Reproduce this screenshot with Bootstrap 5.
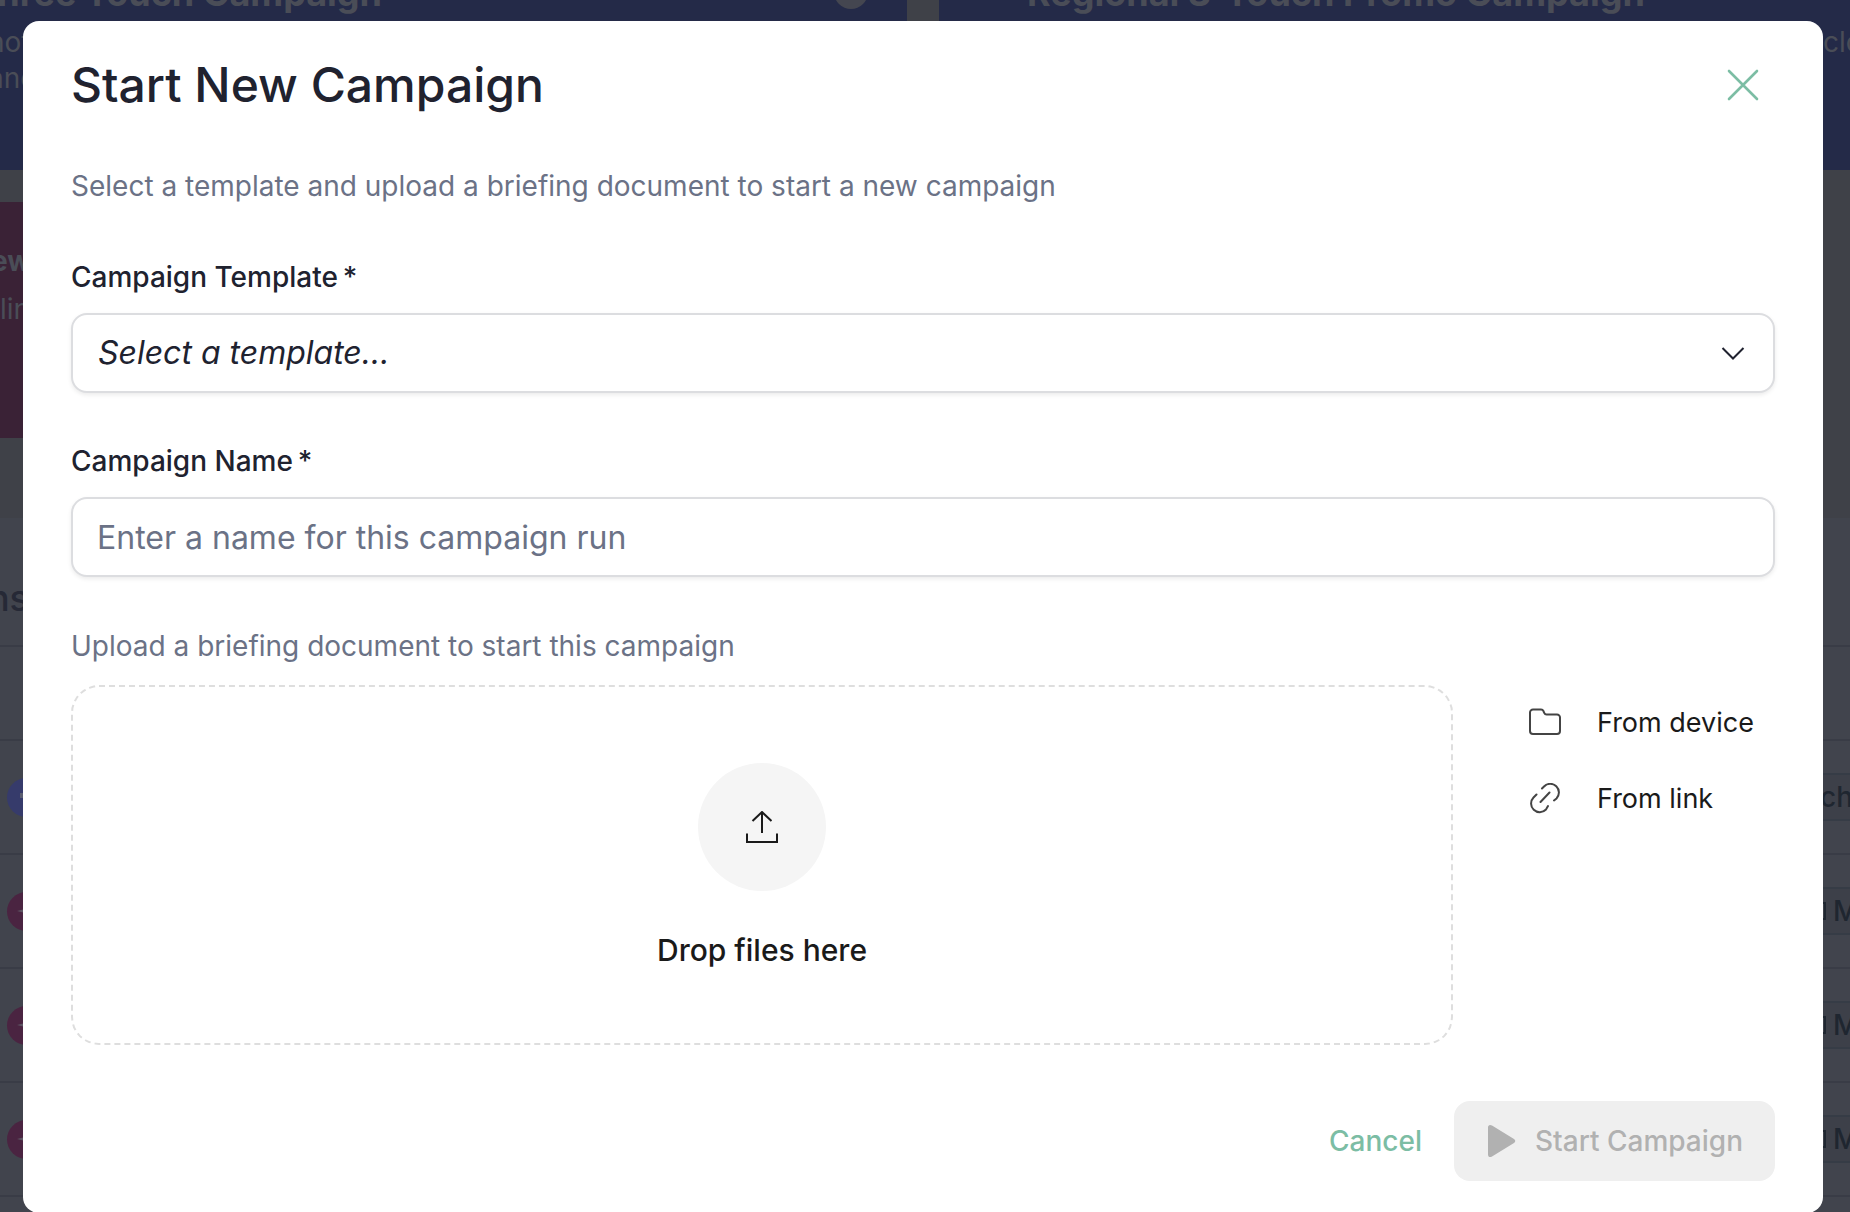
<!DOCTYPE html>
<html lang="en">
<head>
<meta charset="utf-8">
<meta name="viewport" content="width=device-width, initial-scale=1">
<title>Start New Campaign</title>
<link href="https://cdn.jsdelivr.net/npm/bootstrap@5.3.0/dist/css/bootstrap.min.css" rel="stylesheet">
<style>
  :root { --ink: #20222f; --muted: #6b7286; --mint: #7cbda4; --line: #dcdde0; }
  body { font-family: Inter, "Liberation Sans", sans-serif; background: #3f4148; color: var(--ink); }
  button, input, select { font-family: inherit; }

  /* dimmed page behind the dialog, scrolled sideways */
  .shell { background: #3f4148; color: #4a4d57; }
  .shell-inner { margin: 0 -207px 0 -211px; }
  .tile-grid { display: grid; grid-template-columns: 1fr 1fr; gap: 32px; }
  .tile { background: #242a48; font-size: 28px; line-height: 36px; }
  .tile-tall { height: 170px; }
  .tile-plum { background: #3a2236; height: 236px; padding-top: 41px; }
  .tile-title { font-size: 36px; font-weight: 700; line-height: 40px; margin-top: -27px; white-space: nowrap; }
  .tile-title-a { width: 593px; }
  .tile-title-b { padding-left: 88px; }
  .tile-copy { padding: 11px 0 0 199px; }
  .tile-copy-b { padding: 11px 0 0 884px; }
  .tile-plum .tile-copy { padding: 12px 0 0 211px; }
  .tile-name { width: 242px; }
  .tile-dot { width: 34px; height: 34px; background: #444650; margin: -25px 39px 0 0; }
  .runs { background: #41444d; margin-top: 80px; height: 900px; }
  .runs-title { height: 127px; padding-top: 58px; width: 240px; font-size: 36px; line-height: 44px; font-weight: 500; color: #262936; }
  .runs-line { border-top: 2px solid #393c46; }
  .runs-head { height: 94px; }
  .runs-row { height: 114px; padding-left: 218px; }
  .run-mark { width: 39px; height: 39px; background: #4a2441; }
  .run-mark-blue { background: #363b6b; }
  .run-tag { width: 260px; height: 48px; padding-left: 21px; border: 2px solid #363c46; background: #3d4049; color: #1f2630; font-size: 28px; font-weight: 500; }

  /* dialog */
  .modal { scrollbar-width: none; }
  .start-dialog { max-width: 1800px; margin: 21px 27px 0 23px; }
  .start-card { border: 0; border-radius: 16px; padding: 35px 48px 32px; color: var(--ink); }
  .start-title { font-size: 48px; line-height: 58px; font-weight: 500; }
  .close-x { width: 64px; height: 58px; color: var(--mint); }
  .copy { font-size: 28px; line-height: 40px; color: var(--muted); }
  .copy-top { margin-top: 52px; margin-bottom: 51px; }
  .field { margin-bottom: 48px; }
  .field-label { font-size: 28px; line-height: 40px; font-weight: 500; margin-bottom: 16px; }
  .field-box { height: 80px; padding: 0 24px; border: 2px solid var(--line); border-radius: 16px; font-size: 32px; line-height: 40px; color: var(--ink); box-shadow: 0 2px 4px rgba(0,0,0,.08); }
  .field-box::placeholder { color: var(--muted); opacity: 1; }
  .field-pick { font-style: italic; padding-left: 25px; background-size: 24px 24px; background-position: right 28px center;
    background-image: url("data:image/svg+xml,%3csvg xmlns='http://www.w3.org/2000/svg' viewBox='0 0 24 24'%3e%3cpath fill='none' stroke='%2320222f' stroke-width='2' d='M1.500 7l10.500 10.500L22.500 7'/%3e%3c/svg%3e"); }
  .copy-upload { margin: 1px 0 19px; }
  .drop-row { gap: 76px; }
  .drop-zone { height: 360px; border: 2px dashed #dedede; border-radius: 28px; color: #1a1a1a; font-size: 30px; line-height: 40px; font-weight: 500; gap: 39px; padding-top: 3px; }
  .drop-circle { width: 128px; height: 128px; background: #f5f5f5; }
  .source-list { width: 246px; gap: 36px; padding-top: 18px; }
  .source-btn { gap: 36px; font-size: 27px; line-height: 40px; color: #1a1a1a; }
  .actions { margin-top: 56px; gap: 32px; }
  .act { height: 80px; font-size: 28px; line-height: 40px; font-weight: 500; border: 0; border-radius: 16px; }
  .act-cancel { color: var(--mint); }
  .act-start, .act-start:disabled { background: #efefef; color: #b1b1b1; opacity: 1; padding: 0 32px; gap: 17px; }
</style>
<script src="https://cdn.jsdelivr.net/npm/bootstrap@5.3.0/dist/js/bootstrap.bundle.min.js"></script>
</head>
<body>

<div class="shell position-fixed top-0 start-0 w-100 h-100 overflow-hidden" aria-hidden="true">
  <div class="shell-inner">
    <div class="tile-grid">
      <div class="tile tile-tall">
        <div class="d-flex justify-content-between">
          <div class="tile-title tile-title-a text-end">Three Touch Campaign</div>
          <span class="tile-dot rounded-circle"></span>
        </div>
        <div class="tile-copy">not<br>and</div>
      </div>
      <div class="tile tile-tall">
        <div class="tile-title tile-title-b">Regional 3-Touch Promo Campaign</div>
        <div class="tile-copy-b">cloud</div>
      </div>
      <div class="tile tile-plum">
        <div class="tile-name text-end"><b>New</b></div>
        <div class="tile-copy">line</div>
      </div>
    </div>
    <div class="runs">
      <div class="runs-title text-end">Campaigns</div>
      <div class="runs-line runs-head"></div>
      <div class="runs-line runs-row d-flex align-items-center justify-content-between">
        <span class="run-mark run-mark-blue rounded-circle d-flex align-items-center justify-content-center">
          <svg width="18" height="18" viewBox="0 0 18 18" fill="#5a5d70"><path d="M2 5h14v5h-5v4H8v-4H2z"/></svg></span>
        <span class="run-tag d-flex align-items-center">ch</span>
      </div>
      <div class="runs-line runs-row d-flex align-items-center justify-content-between">
        <span class="run-mark rounded-circle d-flex align-items-center justify-content-center">
          <svg width="22" height="22" viewBox="0 0 22 22" fill="#5e5564"><path d="M11 1l2 8 8 2-8 2-2 8-2-8-8-2 8-2z"/></svg></span>
        <span class="run-tag d-flex align-items-center"><svg width="13" height="18" viewBox="0 0 13 18" fill="none" stroke="#1f2630" stroke-width="2"><path d="M-4 1h9v16h-9"/></svg>M</span>
      </div>
      <div class="runs-line runs-row d-flex align-items-center justify-content-between">
        <span class="run-mark rounded-circle d-flex align-items-center justify-content-center">
          <svg width="22" height="22" viewBox="0 0 22 22" fill="#5e5564"><path d="M11 1l2 8 8 2-8 2-2 8-2-8-8-2 8-2z"/></svg></span>
        <span class="run-tag d-flex align-items-center"><svg width="13" height="18" viewBox="0 0 13 18" fill="none" stroke="#1f2630" stroke-width="2"><path d="M-4 1h9v16h-9"/></svg>M</span>
      </div>
      <div class="runs-line runs-row d-flex align-items-center justify-content-between">
        <span class="run-mark rounded-circle d-flex align-items-center justify-content-center">
          <svg width="22" height="22" viewBox="0 0 22 22" fill="#5e5564"><path d="M11 1l2 8 8 2-8 2-2 8-2-8-8-2 8-2z"/></svg></span>
        <span class="run-tag d-flex align-items-center"><svg width="13" height="18" viewBox="0 0 13 18" fill="none" stroke="#1f2630" stroke-width="2"><path d="M-4 1h9v16h-9"/></svg>M</span>
      </div>
      <div class="runs-line"></div>
    </div>
  </div>
</div>

<div class="modal d-block" role="dialog" aria-modal="true" aria-labelledby="dialogTitle">
  <div class="modal-dialog start-dialog">
    <form class="modal-content start-card">
      <div class="d-flex justify-content-between align-items-center">
        <h1 class="start-title mb-0" id="dialogTitle">Start New Campaign</h1>
        <button type="button" class="btn border-0 p-0 close-x d-flex align-items-center justify-content-center" aria-label="Close">
          <svg width="32" height="32" viewBox="0 0 32 32" fill="none" stroke="currentColor" stroke-width="2.600" stroke-linecap="round"><path d="M2 2l28 28M30 2L2 30"/></svg>
        </button>
      </div>
      <p class="copy copy-top">Select a template and upload a briefing document to start a new campaign</p>

      <div class="field">
        <label class="field-label d-block" for="template">Campaign Template&#8201;*</label>
        <select class="form-select field-box field-pick" id="template">
          <option>Select a template...</option>
        </select>
      </div>
      <div class="field">
        <label class="field-label d-block" for="runName">Campaign Name&#8201;*</label>
        <input class="form-control field-box" id="runName" type="text" placeholder="Enter a name for this campaign run">
      </div>

      <p class="copy copy-upload">Upload a briefing document to start this campaign</p>
      <div class="drop-row d-flex">
        <label class="drop-zone flex-grow-1 d-flex flex-column align-items-center justify-content-center" for="briefing">
          <span class="drop-circle rounded-circle d-flex align-items-center justify-content-center">
            <svg width="32" height="32" viewBox="0 0 32 32" fill="none" stroke="currentColor" stroke-width="2"><path d="M1 22.500V31h30v-8.500M16 22V1M6.500 10L16 1l9.500 9"/></svg>
          </span>
          Drop files here
          <input class="visually-hidden" type="file" id="briefing">
        </label>
        <div class="source-list d-flex flex-column align-items-start">
          <button type="button" class="btn border-0 p-0 source-btn d-flex align-items-center">
            <svg width="32" height="32" viewBox="0 0 32 32" fill="none" stroke="#444" stroke-width="2"><path d="M4 2.500h8c1.200 0 2 .5 2.400 1.500l.8 1.800c.4.900 1 1.700 2.300 1.700H28a3 3 0 0 1 3 3V24a3 3 0 0 1-3 3H4a3 3 0 0 1-3-3V5.500a3 3 0 0 1 3-3z"/></svg>
            From device
          </button>
          <button type="button" class="btn border-0 p-0 source-btn d-flex align-items-center">
            <svg width="32" height="32" viewBox="0 0 32 32" fill="none" stroke="#444" stroke-width="2" stroke-linecap="round"><path d="M13 5.500l2-2a8.600 8.600 0 0 1 12.500 12L25 17.500M7.500 11.500l-3 3a8.600 8.600 0 0 0 12.500 12L19 23M11.500 19l9-9.500"/></svg>
            From link
          </button>
        </div>
      </div>

      <div class="actions d-flex justify-content-end align-items-center">
        <button type="button" class="btn act act-cancel p-0">Cancel</button>
        <button type="submit" class="btn act act-start d-flex align-items-center" disabled>
          <svg width="32" height="34" viewBox="0 0 32 34" fill="currentColor"><path d="M2 3.500C2 1 4 .3 6 1.600L28 15c1.700 1 1.700 3 0 4L6 32.400C4 33.700 2 33 2 30.500z"/></svg>
          Start Campaign
        </button>
      </div>
    </form>
  </div>
</div>
</body>
</html>
